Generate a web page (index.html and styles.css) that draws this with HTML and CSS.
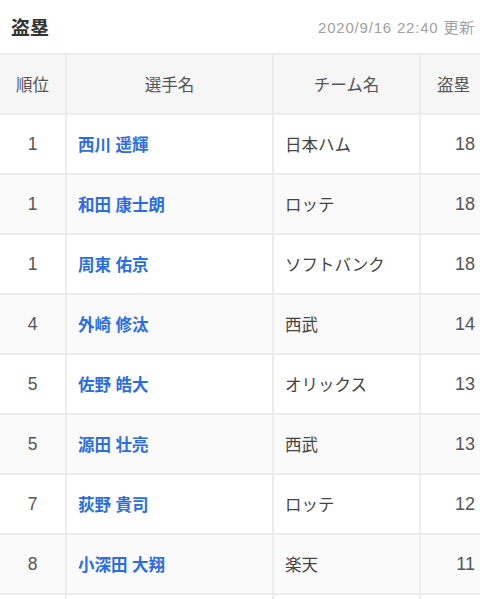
FILE: index.html
```html
<!DOCTYPE html>
<html lang="ja">
<head>
<meta charset="utf-8">
<link rel="stylesheet" href="styles.css">
</head>
<body>
<div class="page">
  <div class="head">
    <h1 class="title">盗塁</h1>
    <span class="updated">2020/9/16 22:40 更新</span>
  </div>
  <table class="rank">
    <colgroup>
      <col class="c1"><col class="c2"><col class="c3"><col class="c4">
    </colgroup>
    <thead>
      <tr><th>順位</th><th>選手名</th><th>チーム名</th><th>盗塁</th></tr>
    </thead>
    <tbody>
      <tr><td class="pos">1</td><td class="name">西川 遥輝</td><td class="team">日本ハム</td><td class="num">18</td></tr>
      <tr><td class="pos">1</td><td class="name">和田 康士朗</td><td class="team">ロッテ</td><td class="num">18</td></tr>
      <tr><td class="pos">1</td><td class="name">周東 佑京</td><td class="team">ソフトバンク</td><td class="num">18</td></tr>
      <tr><td class="pos">4</td><td class="name">外崎 修汰</td><td class="team">西武</td><td class="num">14</td></tr>
      <tr><td class="pos">5</td><td class="name">佐野 皓大</td><td class="team">オリックス</td><td class="num">13</td></tr>
      <tr><td class="pos">5</td><td class="name">源田 壮亮</td><td class="team">西武</td><td class="num">13</td></tr>
      <tr><td class="pos">7</td><td class="name">荻野 貴司</td><td class="team">ロッテ</td><td class="num">12</td></tr>
      <tr><td class="pos">8</td><td class="name">小深田 大翔</td><td class="team">楽天</td><td class="num">11</td></tr>
      <tr class="tail"><td></td><td></td><td></td><td></td></tr>
    </tbody>
  </table>
</div>
</body>
</html>
```

FILE: styles.css
```css
html, body {
  margin: 0;
  padding: 0;
  background: #fff;
  overflow: hidden;
}
body {
  font-family: "Liberation Sans", "Noto Sans CJK JP", sans-serif;
  color: #333;
}
.page {
  width: 480px;
  height: 599px;
  overflow: hidden;
}
.head {
  height: 53px;
  display: flex;
  align-items: center;
  justify-content: space-between;
  padding: 0 5px 0 11px;
}
.title {
  margin: 0;
  font-size: 19px;
  font-weight: 700;
  color: #333;
}
.updated {
  font-size: 15px;
  letter-spacing: 0.8px;
  color: #a0a0a0;
  font-weight: 400;
}
.rank {
  border-collapse: collapse;
  table-layout: fixed;
  width: 487px;
  font-size: 16.5px;
}
.c1 { width: 66px; }
.c2 { width: 207px; }
.c3 { width: 147px; }
.c4 { width: 67px; }
.rank th, .rank td {
  border: 2px solid #ececec;
  height: 60px;
  box-sizing: border-box;
  padding: 0 11px;
}
.rank tr > :first-child { border-left: none; }
.rank th {
  background: #f6f6f6;
  font-weight: 400;
  color: #555;
  text-align: center;
}
.rank tbody tr:nth-child(even) td { background: #fafafa; }
.pos { text-align: center; color: #555; font-size: 17.5px; }
.name { color: #2b6de3; font-weight: 700; }
.team { color: #444; }
.num { text-align: right; color: #555; padding-right: 12px; font-size: 18px; }
```
